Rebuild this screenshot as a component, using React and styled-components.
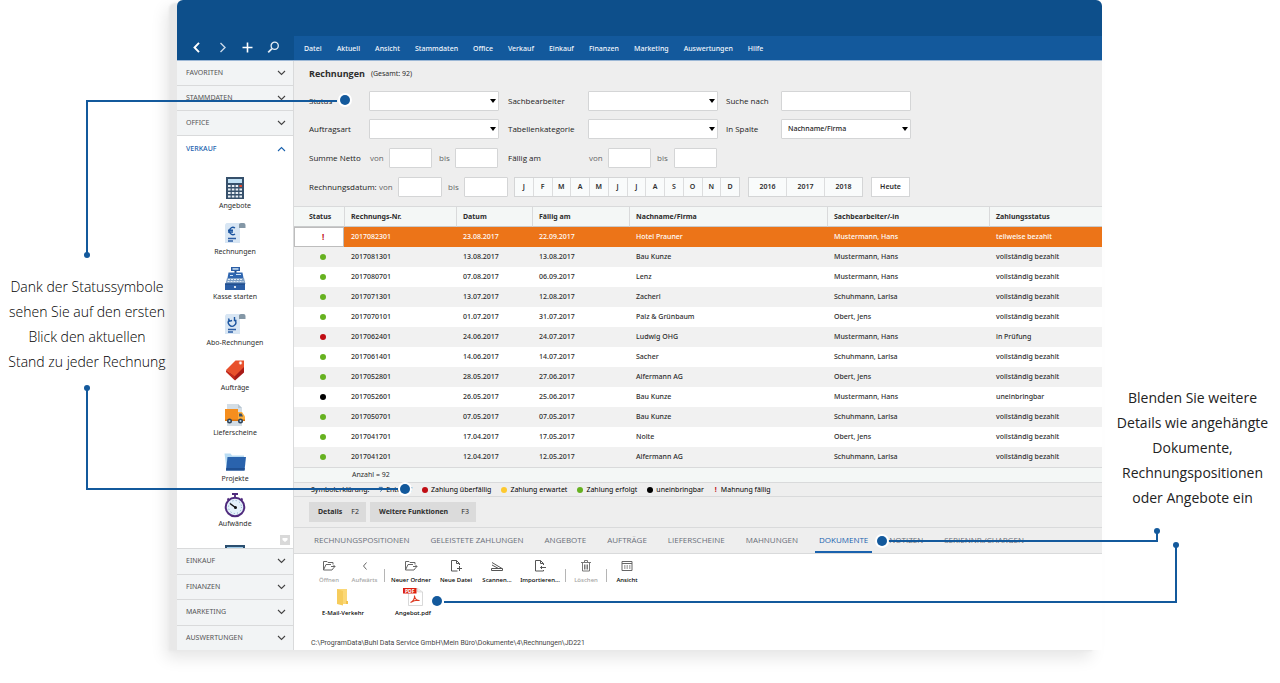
import React from "react";
import styled, { createGlobalStyle, css } from "styled-components";

const c = {
  navy: "#0d4f8b",
  blue: "#13599c",
  link: "#1a62ae",
  line: "#d9dadb",
  panel: "#eeeeee",
  side: "#f2f4f5",
  text: "#2d2d2d",
  muted: "#5c6068",
  orange: "#ec7418",
  green: "#66b120",
  red: "#c00d14",
  yellow: "#fdc92f",
  black: "#000000",
};

const wide = `"Open Sans", "Noto Sans", sans-serif`;

const GlobalStyle = createGlobalStyle`
  *, *::before, *::after { box-sizing: border-box; }
  body { margin: 0; background: #fff; }
  body, button, input, select {
    font-family: "Noto Sans", "Open Sans", sans-serif;
    font-size: 7px;
    line-height: 12px;
    color: ${c.text};
  }
  button { margin: 0; padding: 0; border: 0; background: none; cursor: pointer; }
  svg { display: block; }
`;

/* ---------- page ---------- */
const Page = styled.div`
  display: grid;
  grid-template-columns: 177px minmax(0, 1fr) 178px;
  padding-bottom: 32px;
  overflow: hidden;
`;
const Note = styled.p`
  margin: 0;
  padding-top: ${(p) => p.$top}px;
  font-family: ${wide};
  font-size: 14px;
  line-height: 25px;
  text-align: center;
  white-space: nowrap;
  color: #222;
  position: relative;
  z-index: 1;
  ${(p) => p.$left && css`padding-right: 3px; font-weight: 300; color: #000;`}
  ${(p) => p.$right && css`padding-left: 3px;`}
`;
const Stage = styled.div`
  position: relative;
`;
const Window = styled.div`
  display: flex;
  flex-direction: column;
  border-radius: 7px 7px 0 0;
  background: #fff;
  box-shadow: -9px 2px 2px -1px #e8e8e8, -11px 8px 16px 0 rgba(0, 0, 0, 0.1);
`;

/* ---------- connectors over the window ---------- */
const Wire = styled.span`
  position: absolute;
  pointer-events: none;
  border: 0 solid ${c.blue};
  ${(p) => p.$box}
`;
const Dot = styled.span`
  position: absolute;
  pointer-events: none;
  width: ${(p) => (p.$small ? 6 : 10)}px;
  height: ${(p) => (p.$small ? 6 : 10)}px;
  border-radius: 50%;
  background: ${c.blue};
  box-shadow: ${(p) => (p.$small ? "none" : "0 0 0 2px #fff")};
  ${(p) => p.$at}
`;

/* ---------- header ---------- */
const TitleBar = styled.div`
  height: 36px;
  background: ${c.navy};
  border-radius: 6px 6px 0 0;
`;
const MenuBar = styled.header`
  display: flex;
  height: 25px;
  background: ${c.blue};
  border-bottom: 1px solid #9db8d6;
`;
const Tools = styled.div`
  flex: 0 0 117px;
  display: flex;
  align-items: center;
  justify-content: space-between;
  padding: 0 14px 2px 13px;
  background: ${c.navy};
`;
const ToolButton = styled.button`
  width: 13px;
  height: 13px;
  svg { width: 13px; height: 13px; }
`;
const Menu = styled.nav`
  display: flex;
  align-items: center;
  gap: 15px;
  padding: 2px 0 0 10px;
`;
const MenuLink = styled.a`
  font-size: 7px;
  font-weight: 500;
  color: #f2f7fc;
  text-decoration: none;
`;

/* ---------- body ---------- */
const Body = styled.div`
  display: flex;
  align-items: stretch;
`;
const Sidebar = styled.aside`
  flex: 0 0 117px;
  display: flex;
  flex-direction: column;
  border-right: 1px solid ${c.line};
  background: #fff;
`;
const Section = styled.button`
  flex: 0 0 25px;
  display: flex;
  align-items: center;
  justify-content: space-between;
  padding: 0 7px 0 9px;
  border-bottom: 1px solid ${c.line};
  background: ${c.side};
  font-size: 7px;
  color: #555;
  ${(p) => p.$open && css`
    background: #fff;
    border-bottom: 0;
    color: ${c.link};
    font-weight: 500;
  `}
`;
const LowerSections = styled.div`
  display: flex;
  flex-direction: column;
  height: 102px;
  ${Section} {
    flex: 1 1 0;
    border-bottom: 0;
    border-top: 1px solid ${c.line};
  }
`;
const IconList = styled.div`
  position: relative;
  flex: 1;
  display: flex;
  flex-direction: column;
  padding-top: 7px;
  overflow: hidden;
`;
const IconItem = styled.button`
  flex: 1 1 0;
  display: flex;
  flex-direction: column;
  align-items: center;
  justify-content: flex-end;
  padding-bottom: 1px;
  font-size: 7px;
  svg { width: 24px; height: 24px; overflow: visible; }
`;
const CutItem = styled.div`
  flex: 0 0 17px;
  min-height: 0;
  height: 17px;
  overflow: hidden;
  display: flex;
  align-items: flex-start;
  justify-content: center;
  padding-top: 14px;
`;
const ScrollDown = styled.button`
  position: absolute;
  right: 3px;
  bottom: 3px;
  width: 10px;
  height: 10px;
  background: #d9d9d9;
`;

const Main = styled.main`
  flex: 1;
  min-width: 0;
  display: flex;
  flex-direction: column;
  background: ${c.panel};
`;
const Heading = styled.div`
  display: flex;
  align-items: center;
  gap: 6px;
  height: 26px;
  padding-left: 15px;
`;
const H1 = styled.h1`
  margin: 0;
  font-family: ${wide};
  font-size: 9px;
  font-weight: 700;
`;
const Count = styled.span`
  font-size: 7px;
`;

/* ---------- filters ---------- */
const Filters = styled.form`
  display: flex;
  flex-direction: column;
  gap: 9px;
  padding: 4px 0 9px 15px;
`;
const FilterGrid = styled.div`
  display: grid;
  grid-template-columns: 60px 139px 80px 138px 55px 130px;
  row-gap: 8px;
  align-items: center;
`;
const Label = styled.label`
  font-family: ${wide};
  font-size: 8px;
  color: ${(p) => (p.$light ? "#666" : "#222")};
  white-space: nowrap;
`;
const control = css`
  height: 20px;
  padding: 0 6px;
  border: 1px solid #d4d5d6;
  border-radius: 1px;
  background: #fff;
  color: #222;
  outline: 0;
`;
const Field = styled.input`
  ${control}
  width: ${(p) => p.$w}px;
`;
const SelectBox = styled.div`
  position: relative;
  width: 130px;
  &::after {
    content: "";
    position: absolute;
    right: 3px;
    top: 8px;
    border: 3px solid transparent;
    border-top: 4px solid #000;
    border-bottom: 0;
    pointer-events: none;
  }
`;
const Select = styled.select`
  ${control}
  width: 100%;
  appearance: none;
  font-size: 7px;
  font-weight: 500;
`;
const RangeRow = styled.div`
  display: grid;
  grid-template-columns: ${(p) => p.$cols};
  align-items: center;
`;
const ButtonGroup = styled.div`
  display: flex;
  height: 20px;
  border: 1px solid #d4d5d6;
  background: #f9fbfb;
  margin-right: 8px;
`;
const GroupButton = styled.button`
  flex: 1;
  font-size: 7px;
  font-weight: 600;
  & + & { border-left: 1px solid #dcddde; }
`;
const TodayButton = styled.button`
  height: 20px;
  border: 1px solid #d4d5d6;
  background: #fff;
  font-size: 7px;
  font-weight: 600;
`;

/* ---------- table ---------- */
const Table = styled.table`
  width: 100%;
  table-layout: fixed;
  border-collapse: separate;
  border-spacing: 0;
  border-top: 1px solid ${c.line};
  background: #fff;
`;
const Th = styled.th`
  height: 20px;
  padding: 0 0 0 6px;
  border-left: 1px solid ${c.line};
  border-bottom: 1px solid #c9cbcc;
  background: #f4f7f6;
  text-align: left;
  font-size: 7px;
  font-weight: 700;
  white-space: nowrap;
  &:first-child { border-left: 0; padding-left: 15px; }
`;
const Tr = styled.tr`
  background: ${(p) => (p.$active ? c.orange : p.$odd ? "#f1f1f1" : "#fff")};
  color: ${(p) => (p.$active ? "#fff" : c.text)};
`;
const Td = styled.td`
  height: 20px;
  padding: 0 0 0 7px;
  font-size: 7px;
  font-weight: 500;
  white-space: nowrap;
  ${(p) => p.$status && css`padding-left: 26px;`}
  ${(p) => p.$boxed && css`
    padding-left: 27px;
    background: #fff;
    border: 1px solid #bdbdbd;
    color: ${c.red};
    font-size: 8px;
    font-weight: 700;
  `}
`;
const Bullet = styled.span`
  display: block;
  flex: 0 0 6px;
  width: 6px;
  height: 6px;
  border-radius: 50%;
  background: ${(p) => p.$color};
`;
const Total = styled.div`
  height: 15px;
  padding: 1px 0 0 58px;
  border-top: 1px solid ${c.line};
  background: #f4f7f6;
  font-size: 7px;
`;
const Legend = styled.div`
  display: flex;
  align-items: center;
  gap: 10px;
  height: 15px;
  padding-left: 17px;
  border-top: 1px solid ${c.line};
  border-bottom: 1px solid ${c.line};
  font-size: 7px;
  white-space: nowrap;
`;
const LegendItem = styled.span`
  display: flex;
  align-items: center;
  gap: 3px;
  color: #000;
  ${(p) => p.$w && css`width: ${p.$w}px;`}
`;
const Bang = styled.b`
  width: 4px;
  text-align: center;
  color: ${c.red};
`;
const Actions = styled.div`
  display: flex;
  align-items: center;
  gap: 4px;
  height: 30px;
  padding-left: 15px;
`;
const ActionButton = styled.button`
  display: flex;
  align-items: center;
  justify-content: space-between;
  width: ${(p) => p.$w}px;
  height: 20px;
  padding: 0 7px 0 9px;
  background: #dbdbdb;
  font-size: 7px;
  font-weight: 700;
  span { font-weight: 400; }
`;

/* ---------- tabs and documents ---------- */
const Tabs = styled.div`
  display: flex;
  gap: 13px;
  height: 27px;
  padding-left: 16px;
  border-top: 1px solid ${c.line};
  border-bottom: 1px solid ${c.line};
`;
const Tab = styled.button`
  padding: 0 4px;
  font-family: ${wide};
  font-size: 8px;
  color: #6a6f7a;
  border-bottom: 2px solid transparent;
  white-space: nowrap;
  ${(p) => p.$active && css`
    color: ${c.link};
    border-bottom-color: ${c.link};
  `}
`;
const Docs = styled.section`
  flex: 1;
  display: flex;
  flex-direction: column;
  background: #fff;
`;
const Toolbar = styled.div`
  display: flex;
  align-items: center;
  height: 34px;
  padding: 3px 0 0 17px;
`;
const DocButton = styled.button`
  width: ${(p) => p.$w}px;
  display: flex;
  flex-direction: column;
  align-items: center;
  gap: 1px;
  font-size: 6px;
  font-weight: 500;
  white-space: nowrap;
  color: ${(p) => (p.$off ? "#a5a5a5" : "#000")};
  svg { width: 14px; height: 14px; }
`;
const Separator = styled.span`
  width: 1px;
  height: 13px;
  margin: 6px 2px 0;
  background: #b5b5b5;
`;
const Files = styled.div`
  display: flex;
  padding-left: 14px;
`;
const FileItem = styled.button`
  width: 70px;
  display: flex;
  flex-direction: column;
  align-items: center;
  font-size: 6px;
  font-weight: 500;
  color: #000;
  svg { width: 20px; height: 18px; overflow: visible; margin-bottom: 1px; }
`;
const Path = styled.div`
  margin-top: 18px;
  padding: 0 0 1px 17px;
  font-family: Roboto, "Open Sans", sans-serif;
  font-size: 7px;
  color: #444;
`;

/* ---------- icons ---------- */
const Chevron = ({ up }) => (
  <svg width="9" height="6" viewBox="0 0 9 6" fill="none" stroke={up ? c.link : "#444"} strokeWidth="1.1">
    <path d={up ? "M1 5 4.5 1.5 8 5" : "M1 1 4.5 4.5 8 1"} />
  </svg>
);
const Back = () => (
  <svg viewBox="0 0 13 13" fill="none" stroke="#fff" strokeWidth="1.9"><path d="M9 1.8 4.5 6.5 9 11.2" /></svg>
);
const Forward = () => (
  <svg viewBox="0 0 13 13" fill="none" stroke="#c9d9ea" strokeWidth="1.4"><path d="M4.5 2 9 6.5 4.5 11" /></svg>
);
const Plus = () => (
  <svg viewBox="0 0 13 13" fill="none" stroke="#fff" strokeWidth="1.6"><path d="M6.5 1.5v10M1.5 6.5h10" /></svg>
);
const Search = () => (
  <svg viewBox="0 0 13 13" fill="none" stroke="#e6eef7" strokeWidth="1.3">
    <circle cx="7.7" cy="4.8" r="3.6" /><path d="M5 7.6 1.2 11.4" strokeWidth="1.7" />
  </svg>
);
const Calculator = () => (
  <svg viewBox="0 0 24 24">
    <rect x="3" y="1" width="18" height="22" fill="#36506b" />
    <rect x="5" y="3" width="14" height="4" fill="#bfe0f5" />
    <g fill="#e9eff5">
      {[9, 12.5, 16, 19.5].map((y) => [5, 8.8, 12.6, 16.4].map((x) => (
        <rect key={`${x}-${y}`} x={x} y={y} width="2.6" height="2" fill={x > 16 && y < 10 ? "#e2492c" : "#e9eff5"} />
      )))}
    </g>
  </svg>
);
const Sheet = ({ children }) => (
  <svg viewBox="0 0 24 24">
    <path d="M3.500 1H17v20H2V2.500Z" fill="#d8e6f4" />
    <path d="M16 6V3.500A2 2 0 0 1 18 1h2.500A2 2 0 0 1 22.500 3v3Z" fill="#8497a6" />
    {children}
    <path d="M5 16.500h8M5 19h5" stroke="#2a5da5" strokeWidth="1.300" />
  </svg>
);
const Invoice = () => (
  <Sheet>
    <path d="M12 6a3.600 3.600 0 1 0 0 6M5 8.200h5M5 10h5" fill="none" stroke="#1c55a0" strokeWidth="1.400" />
  </Sheet>
);
const Recurring = () => (
  <Sheet>
    <path d="M6.500 6.800a3.700 3.700 0 1 0 5.400.3M5.500 5.500l1 2.600 2.600-.6M11.500 4v3.500h2" fill="none" stroke="#1c55a0" strokeWidth="1.400" />
  </Sheet>
);
const Register = () => (
  <svg viewBox="0 0 24 24">
    <rect x="8" y="0" width="9" height="4" fill="#2a5da5" /><rect x="9.500" y="1.200" width="6" height="1.500" fill="#cfe4f6" />
    <path d="M11.500 4h2v2h-2z" fill="#1b4480" />
    <path d="M5.500 5.500h14l1 5.500h-16z" fill="#2f66b0" />
    <path d="M7 8.500h3M13 7.500h5" stroke="#cfe4f6" strokeWidth="1" />
    <path d="M4 11h17l1.500 6H2.500z" fill="#7fa0c6" />
    <path d="M5 12.500h15M4.500 14.500h16" stroke="#e4edf6" strokeWidth="1" strokeDasharray="2 1" />
    <rect x="2" y="16.500" width="20" height="6.500" fill="#2a5da5" />
    <path d="M2 17h20" stroke="#1b4480" /><circle cx="12" cy="20" r="1.100" fill="#fff" />
  </svg>
);
const Tag = () => (
  <svg viewBox="0 0 24 24">
    <path d="m3 13 9 9.500 9-8V8L12 17Z" fill="#a81a17" />
    <path d="M21 2.500V9L11.500 18.500 3 12l9.500-9.500Z" fill="#e8502c" />
    <path d="m3 12 8.500 6.500v3.500L3 14Z" fill="#c32a1c" />
    <circle cx="17.500" cy="5" r="1.400" fill="#fff" stroke="#f7b5a0" strokeWidth=".5" />
  </svg>
);
const Truck = () => (
  <svg viewBox="0 0 24 24">
    <path d="M4 1h11l4 4v18H4Z" fill="#d3dde5" /><path d="M15 1v4h4Z" fill="#b7c6d2" />
    <rect x="2" y="6" width="13" height="12" fill="#f58e1e" />
    <path d="M15 9h4l3 4.500V18h-7Z" fill="#fdae3b" /><path d="M16 10.500h2.500l1.500 3H16Z" fill="#3c5068" />
    <path d="M2 16.500h20V18H2Z" fill="#d9740f" />
    <g fill="#2f4358"><circle cx="6.500" cy="18" r="2.500" /><circle cx="17.500" cy="18" r="2.500" /></g>
    <g fill="#b9d4ea"><circle cx="6.500" cy="18" r="1" /><circle cx="17.500" cy="18" r="1" /></g>
  </svg>
);
const Folder = () => (
  <svg viewBox="0 0 24 24">
    <path d="M1.500 4.500h6l1.500 2h12V20H3.500Z" fill="#b9dcf3" />
    <path d="M4.500 8h18.500l-1.500 13.500H3Z" fill="#2a63ad" /><path d="M3.300 19 3 21.500h18.500l.3-2.500Z" fill="#1f5093" />
  </svg>
);
const Stopwatch = () => (
  <svg viewBox="0 0 24 24">
    <path d="M9 0h6M12 0v3.500M4.500 4.500 6 6M19.500 4.500 18 6" stroke="#4f2a7d" strokeWidth="1.800" />
    <circle cx="12" cy="13" r="9.300" fill="#e4f1fa" stroke="#4f2a7d" strokeWidth="2" />
    <circle cx="12" cy="13" r="6.500" fill="none" stroke="#7ba3c4" strokeWidth="1" strokeDasharray="1 2.400" />
    <path d="M13 14 7 9.500" stroke="#111" strokeWidth="1.500" /><circle cx="12.500" cy="13.500" r="1.500" fill="#111" />
  </svg>
);
const doc = { viewBox: "0 0 14 14", fill: "none", stroke: "currentColor", strokeWidth: 1 };
const OpenFolder = () => (
  <svg {...doc} stroke="#666"><path d="M11 5.500V3.500H6L5 2.500H1.500v8.500h8.500l1.500-2M1.500 11l2.500-5.500h5M9 7.500h4M11.500 6 13 7.500 11.500 9" /></svg>
);
const Up = () => <svg {...doc} stroke="#666"><path d="M8.500 3.500 5.500 7l3 3.500" /></svg>;
const NewFile = () => (
  <svg {...doc} stroke="#555"><path d="M10.500 6V4.500L7.500 1.500h-5v10.500h6M7.500 1.500v3h3M10.500 7v5M8 9.500h5" /></svg>
);
const Scan = () => <svg {...doc} stroke="#555"><path d="M2 3.500 12 9.500H2M2 6l6.500 3.500M1.500 9.500h11v2h-11z" /></svg>;
const Import = () => (
  <svg {...doc} stroke="#555"><path d="M10.500 6V4.500L7.500 1.500h-5v10.500h8V11M7.500 1.500v3h3M13 8.500H7.500M9 7 7.500 8.500 9 10" /></svg>
);
const Trash = () => (
  <svg {...doc} stroke="#777"><path d="M2 3.500h10M5.500 3.500v-2h3v2M3.500 3.500v8.500h7V3.500M5.500 5.500v5M7 5.500v5M8.500 5.500v5" /></svg>
);
const Grid = () => (
  <svg {...doc} stroke="#666"><path d="M2 2.500h10v9H2zM2 4.500h10" /><path d="M4 7h6.500M4 9h6.500" strokeDasharray="1.500 1" /></svg>
);
const YellowFolder = () => (
  <svg viewBox="0 0 20 18"><path d="M4 1h10v15H4Z" fill="#fbd877" /><path d="M4 1l6 2v14.500L4 16Z" fill="#f6cc5c" /><path d="M13 13h2v3h-2z" fill="#f3c14b" /></svg>
);
const Pdf = () => (
  <svg viewBox="0 0 20 18">
    <path d="M3.500.500h11L19.500 4v13.500h-14v-13" fill="#fff" stroke="#cfcfcf" strokeWidth=".8" />
    <path d="M14.500.500V4h5" fill="#eee" stroke="#cfcfcf" strokeWidth=".6" />
    <rect x="0" y="0" width="13.500" height="5.500" fill="#dc1f10" />
    <text x="2" y="4.600" fontSize="5" fontWeight="700" fill="#fff">PDF</text>
    <path d="M7.500 14.500c2.500-1 4.500-4 4-7M11.500 8c.5 3 2.500 4.500 5 4.500-3-.8-6 .3-9 2" fill="none" stroke="#dc3a22" strokeWidth="1.100" />
  </svg>
);

/* ---------- data ---------- */
const menu = ["Datei", "Aktuell", "Ansicht", "Stammdaten", "Office", "Verkauf", "Einkauf", "Finanzen", "Marketing", "Auswertungen", "Hilfe"];
const sideIcons = [
  ["Angebote", Calculator], ["Rechnungen", Invoice], ["Kasse starten", Register], ["Abo-Rechnungen", Recurring],
  ["Aufträge", Tag], ["Lieferscheine", Truck], ["Projekte", Folder], ["Aufwände", Stopwatch],
];
const rows = [
  ["!", "2017082301", "23.08.2017", "22.09.2017", "Hotel Prauner", "Mustermann, Hans", "teilweise bezahlt"],
  ["green", "2017081301", "13.08.2017", "13.08.2017", "Bau Kunze", "Mustermann, Hans", "vollständig bezahlt"],
  ["green", "2017080701", "07.08.2017", "06.09.2017", "Lenz", "Mustermann, Hans", "vollständig bezahlt"],
  ["green", "2017071301", "13.07.2017", "12.08.2017", "Zacherl", "Schuhmann, Larisa", "vollständig bezahlt"],
  ["green", "2017070101", "01.07.2017", "31.07.2017", "Palz & Grünbaum", "Obert, Jens", "vollständig bezahlt"],
  ["red", "2017062401", "24.06.2017", "24.07.2017", "Ludwig OHG", "Mustermann, Hans", "in Prüfung"],
  ["green", "2017061401", "14.06.2017", "14.07.2017", "Sacher", "Schuhmann, Larisa", "vollständig bezahlt"],
  ["green", "2017052801", "28.05.2017", "27.06.2017", "Alfermann AG", "Obert, Jens", "vollständig bezahlt"],
  ["black", "2017052601", "26.05.2017", "25.06.2017", "Bau Kunze", "Mustermann, Hans", "uneinbringbar"],
  ["green", "2017050701", "07.05.2017", "07.05.2017", "Bau Kunze", "Schuhmann, Larisa", "vollständig bezahlt"],
  ["green", "2017041701", "17.04.2017", "17.05.2017", "Nolte", "Obert, Jens", "vollständig bezahlt"],
  ["green", "2017041201", "12.04.2017", "12.05.2017", "Alfermann AG", "Schuhmann, Larisa", "vollständig bezahlt"],
];
const heads = ["Status", "Rechnungs-Nr.", "Datum", "Fällig am", "Nachname/Firma", "Sachbearbeiter/-in", "Zahlungsstatus"];
const colWidths = [50, 112, 76, 97, null, 162, 113];
const tabs = ["RECHNUNGSPOSITIONEN", "GELEISTETE ZAHLUNGEN", "ANGEBOTE", "AUFTRÄGE", "LIEFERSCHEINE", "MAHNUNGEN", "DOKUMENTE", "NOTIZEN", "SERIENNR./CHARGEN"];

const Dropdown = ({ id, value = "" }) => (
  <SelectBox>
    <Select id={id} defaultValue={value}><option>{value}</option></Select>
  </SelectBox>
);

export default function App() {
  return (
    <>
      <GlobalStyle />
      <Page>
        <Note $left $top={274}>
          Dank der Statussymbole<br />sehen Sie auf den ersten<br />Blick den aktuellen<br />Stand zu jeder Rechnung
        </Note>
        <Stage>
          <Window>
            <TitleBar />
            <MenuBar>
              <Tools>
                <ToolButton aria-label="Zurück"><Back /></ToolButton>
                <ToolButton aria-label="Vor"><Forward /></ToolButton>
                <ToolButton aria-label="Neu"><Plus /></ToolButton>
                <ToolButton aria-label="Suchen"><Search /></ToolButton>
              </Tools>
              <Menu>{menu.map((m) => <MenuLink href="#" key={m}>{m}</MenuLink>)}</Menu>
            </MenuBar>
            <Body>
              <Sidebar>
                {["FAVORITEN", "STAMMDATEN", "OFFICE"].map((s) => <Section key={s}>{s}<Chevron /></Section>)}
                <Section $open>VERKAUF<Chevron up /></Section>
                <IconList>
                  {sideIcons.map(([name, Icon]) => <IconItem key={name}><Icon />{name}</IconItem>)}
                  <CutItem>
                    <svg width="20" height="12" viewBox="0 0 20 12"><path d="M0 0h20v12H0z" fill="#2b4f70" /><path d="M2 2h16v10H2z" fill="#9fcbe8" /></svg>
                  </CutItem>
                  <ScrollDown aria-label="Weiter">
                    <svg width="10" height="10" viewBox="0 0 10 10"><path d="M2.500 3h5v2L5 7 2.500 5Z" fill="#fff" /></svg>
                  </ScrollDown>
                </IconList>
                <LowerSections>
                  {["EINKAUF", "FINANZEN", "MARKETING", "AUSWERTUNGEN"].map((s) => <Section key={s}>{s}<Chevron /></Section>)}
                </LowerSections>
              </Sidebar>
              <Main>
                <Heading><H1>Rechnungen</H1><Count>(Gesamt: 92)</Count></Heading>
                <Filters>
                  <FilterGrid>
                    <Label htmlFor="status">Status</Label><Dropdown id="status" />
                    <Label htmlFor="agent">Sachbearbeiter</Label><Dropdown id="agent" />
                    <Label htmlFor="query">Suche nach</Label><Field id="query" $w={130} />
                    <Label htmlFor="type">Auftragsart</Label><Dropdown id="type" />
                    <Label htmlFor="cat">Tabellenkategorie</Label><Dropdown id="cat" />
                    <Label htmlFor="col">In Spalte</Label><Dropdown id="col" value="Nachname/Firma" />
                  </FilterGrid>
                  <RangeRow $cols="61px 19px 50px 16px 53px 81px 19px 49px 17px 44px">
                    <Label as="span">Summe Netto</Label>
                    <Label $light htmlFor="n1">von</Label><Field id="n1" $w={43} />
                    <Label $light htmlFor="n2">bis</Label><Field id="n2" $w={43} />
                    <Label as="span">Fällig am</Label>
                    <Label $light htmlFor="f1">von</Label><Field id="f1" $w={43} />
                    <Label $light htmlFor="f2">bis</Label><Field id="f2" $w={43} />
                  </RangeRow>
                  <RangeRow $cols="70px 19px 50px 16px 50px 234px 123px 39px">
                    <Label as="span">Rechnungsdatum:</Label>
                    <Label $light htmlFor="d1">von</Label><Field id="d1" $w={44} />
                    <Label $light htmlFor="d2">bis</Label><Field id="d2" $w={44} />
                    <ButtonGroup>{[..."JFMAMJJASOND"].map((m, i) => <GroupButton type="button" key={i}>{m}</GroupButton>)}</ButtonGroup>
                    <ButtonGroup>{["2016", "2017", "2018"].map((y) => <GroupButton type="button" key={y}>{y}</GroupButton>)}</ButtonGroup>
                    <TodayButton type="button">Heute</TodayButton>
                  </RangeRow>
                </Filters>
                <Table>
                  <colgroup>{colWidths.map((w, i) => <col key={i} width={w || undefined} />)}</colgroup>
                  <thead><tr>{heads.map((h) => <Th key={h}>{h}</Th>)}</tr></thead>
                  <tbody>
                    {rows.map(([status, ...cells], i) => (
                      <Tr key={cells[0]} $active={i === 0} $odd={i % 2 === 1}>
                        <Td $status $boxed={i === 0}>{status === "!" ? "!" : <Bullet $color={c[status]} />}</Td>
                        {cells.map((t, j) => <Td key={j}>{t}</Td>)}
                      </Tr>
                    ))}
                  </tbody>
                </Table>
                <Total>Anzahl = 92</Total>
                <Legend>
                  <LegendItem $w={57}>Symbolerklärung:</LegendItem>
                  <LegendItem $w={34}>
                    <svg width="6" height="7" viewBox="0 0 6 7" fill="none" stroke={c.blue}><path d="M1 1h4v2.500L2.500 6M1 3.500h3" /></svg>
                    Entwurf
                  </LegendItem>
                  <LegendItem><Bullet $color={c.red} />Zahlung überfällig</LegendItem>
                  <LegendItem><Bullet $color={c.yellow} />Zahlung erwartet</LegendItem>
                  <LegendItem><Bullet $color={c.green} />Zahlung erfolgt</LegendItem>
                  <LegendItem><Bullet $color={c.black} />uneinbringbar</LegendItem>
                  <LegendItem><Bang>!</Bang>Mahnung fällig</LegendItem>
                </Legend>
                <Actions>
                  <ActionButton $w={57}>Details <span>F2</span></ActionButton>
                  <ActionButton $w={106}>Weitere Funktionen <span>F3</span></ActionButton>
                </Actions>
                <Tabs>{tabs.map((t) => <Tab key={t} $active={t === "DOKUMENTE"}>{t}</Tab>)}</Tabs>
                <Docs>
                  <Toolbar>
                    <DocButton $w={36} $off><OpenFolder />Öffnen</DocButton>
                    <DocButton $w={35} $off><Up />Aufwärts</DocButton>
                    <Separator />
                    <DocButton $w={48}><OpenFolder />Neuer Ordner</DocButton>
                    <DocButton $w={42}><NewFile />Neue Datei</DocButton>
                    <DocButton $w={40}><Scan />Scannen...</DocButton>
                    <DocButton $w={46}><Import />Importieren...</DocButton>
                    <Separator />
                    <DocButton $w={36} $off><Trash />Löschen</DocButton>
                    <Separator />
                    <DocButton $w={36}><Grid />Ansicht</DocButton>
                  </Toolbar>
                  <Files>
                    <FileItem><YellowFolder />E-Mail-Verkehr</FileItem>
                    <FileItem><Pdf />Angebot.pdf</FileItem>
                  </Files>
                  <Path>C:\ProgramData\Buhl Data Service GmbH\Mein Büro\Dokumente\4\Rechnungen\JD221</Path>
                </Docs>
              </Main>
            </Body>
          </Window>

          <Wire $box="left:-91px;top:100px;width:251px;height:155px;border-width:2px 0 0 2px;" />
          <Dot $small $at="left:-93px;top:252px;" />
          <Dot $at="left:163px;top:95px;" />
          <Wire $box="left:-91px;top:388px;width:312px;height:102px;border-width:0 0 2px 2px;" />
          <Dot $small $at="left:-93px;top:385px;" />
          <Dot $at="left:223px;top:484px;" />
          <Wire $box="left:705px;right:-56px;top:531px;height:11px;border-width:0 2px 2px 0;" />
          <Dot $small $at="right:-58px;top:528px;" />
          <Dot $at="left:700px;top:536px;" />
          <Wire $box="left:267px;right:-75px;top:545px;height:58px;border-width:0 2px 2px 0;" />
          <Dot $small $at="right:-77px;top:542px;" />
          <Dot $at="left:255px;top:596px;" />
        </Stage>
        <Note $right $top={385}>
          Blenden Sie weitere<br />Details wie angehängte<br />Dokumente,<br />Rechnungspositionen<br />oder Angebote ein
        </Note>
      </Page>
    </>
  );
}
